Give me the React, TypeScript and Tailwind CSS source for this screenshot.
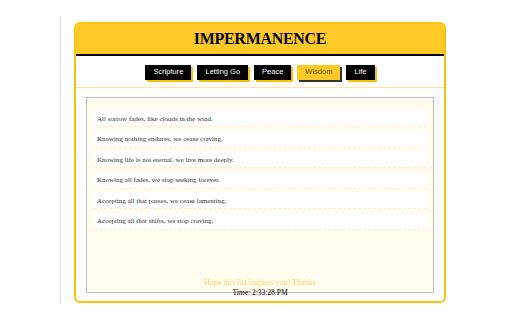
const quotes = [
  'All sorrow fades, like clouds in the wind.',
  'Knowing nothing endures, we cease craving.',
  'Knowing life is not eternal, we live more deeply.',
  'Knowing all fades, we stop seeking forever.',
  'Accepting all that passes, we cease lamenting.',
  'Accepting all that shifts, we stop craving.',
]

const tabs = ['Scripture', 'Letting Go', 'Peace', 'Wisdom', 'Life']

export default function App() {
  const active = 'Wisdom'

  return (
    <div className="w-[512px] h-[320px] bg-white overflow-hidden">
      <div className="ml-[60px] mt-[15px] h-[290px] border-l border-[#e6e6e6] pl-[13px] pt-[7px]">
        <div className="w-[372px] h-[281px] border-2 border-[#ffc107] rounded-[6px] flex flex-col">
          <div className="h-[32px] bg-[#ffc928] border-b-2 border-black rounded-t-[4px] flex items-center justify-center">
            <h1 className="text-[16px] tracking-[-0.3px] font-bold text-black leading-none font-['Liberation_Serif',serif]">
              IMPERMANENCE
            </h1>
          </div>

          <div className="h-[32px] border-b border-[#ffe6a0] flex items-center justify-center gap-[6px] pt-[1px]">
            {tabs.map(tab => (
              <button
                key={tab}
                className={`h-[15px] px-[8px] text-[7.5px] leading-none font-['Liberation_Sans',Arial,sans-serif] ${
                  tab === active ? 'bg-[#ffc928] text-[#5a4a00] shadow-[2px_2px_0_#333]' : 'bg-black text-white shadow-[2px_2px_0_#ffc107]'
                }`}
              >
                {tab}
              </button>
            ))}
          </div>

          <div className="flex-1 px-[10px] pt-[9px]">
            <div className="h-[196px] border border-[#bdbdbd] bg-[#fffdee] flex flex-col px-[7px] pt-[12px]">
              <ul className="flex flex-col gap-[3.5px]">
                {quotes.map(q => (
                  <li
                    key={q}
                    className="h-[17px] bg-white border-b border-dashed border-[#fff0c4] flex items-center px-[3px] pt-[2px] text-[7px] text-[#333] font-['Liberation_Serif',serif]"
                  >
                    {q}
                  </li>
                ))}
              </ul>
              <div className="mt-auto mb-[-6px] flex flex-col items-center font-['Liberation_Serif',serif]">
                <p className="text-[8px] leading-[11px] text-[#ffd36e]">Hope this list inspires you! Thanks</p>
                <p className="text-[7.5px] leading-[10px] text-black">Time: 2:33:28 PM</p>
              </div>
            </div>
          </div>
        </div>
      </div>
    </div>
  )
}
